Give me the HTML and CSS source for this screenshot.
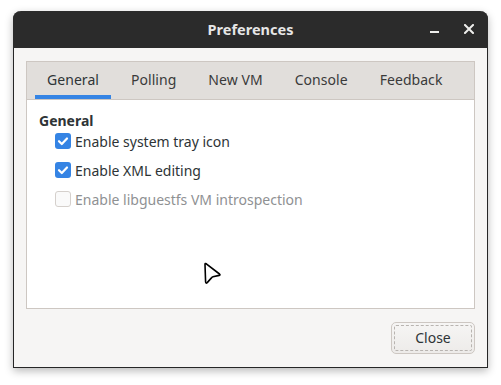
FILE: index.html
```html
<!DOCTYPE html>
<html>
<head>
<meta charset="utf-8">
<link rel="stylesheet" href="styles.css">
</head>
<body>
<div class="window">
  <div class="header">
    <div class="title">Preferences</div>
    <div class="controls">
      <span class="ctl min"><svg width="10" height="10" viewBox="0 0 10 10"><rect x="0" y="7" width="9" height="2" fill="#eeeeec"/></svg></span>
      <span class="ctl close"><svg width="10" height="10" viewBox="0 0 10 10"><path d="M1 1 L9 9 M9 1 L1 9" stroke="#eeeeec" stroke-width="2" stroke-linecap="square"/></svg></span>
    </div>
  </div>
  <div class="body">
    <div class="notebook">
      <div class="tabs">
        <div class="tab active">General</div>
        <div class="tab">Polling</div>
        <div class="tab">New VM</div>
        <div class="tab">Console</div>
        <div class="tab">Feedback</div>
      </div>
      <div class="page">
        <div class="heading">General</div>
        <div class="options">
          <label class="opt"><span class="box on"><svg width="16" height="16" viewBox="0 0 16 16"><path d="M4 8.2 L6.8 11 L12 5.5" fill="none" stroke="#fff" stroke-width="2.2" stroke-linecap="round" stroke-linejoin="round"/></svg></span>Enable system tray icon</label>
          <label class="opt"><span class="box on"><svg width="16" height="16" viewBox="0 0 16 16"><path d="M4 8.2 L6.8 11 L12 5.5" fill="none" stroke="#fff" stroke-width="2.2" stroke-linecap="round" stroke-linejoin="round"/></svg></span>Enable XML editing</label>
          <label class="opt disabled"><span class="box off"></span>Enable libguestfs VM introspection</label>
        </div>
      </div>
    </div>
    <div class="actions">
      <button class="btn">Close</button>
    </div>
  </div>
</div>
<svg class="cursor" width="24" height="26" viewBox="0 0 24 26">
  <path d="M2 2.5 Q2 1 3.3 1.8 L16.5 12 Q17.6 13 16.2 13.4 L10 14.8 Q9.2 15 8.7 15.6 L4.2 20.6 Q2.8 21.8 2.6 20 Z" fill="#fff" stroke="#000" stroke-width="1.6" stroke-linejoin="round"/>
</svg>
</body>
</html>
```
FILE: styles.css
```css
html, body {
  margin: 0;
  padding: 0;
  background: #ffffff;
}
body {
  font-family: "Noto Sans", "Open Sans", sans-serif;
  font-size: 14px;
  color: #2e3436;
  position: relative;
  width: 501px;
  height: 385px;
  overflow: hidden;
}
.window {
  margin: 11px 0 0 13px;
  width: 475px;
  height: 357px;
  box-sizing: border-box;
  border: 1px solid #262626;
  border-top: none;
  border-radius: 8px 8px 0 0;
  background: #f6f5f4;
  box-shadow: 0 3px 9px rgba(0,0,0,0.28);
  display: flex;
  flex-direction: column;
}
.header {
  height: 37px;
  margin: 0 -1px;
  background: #2b2b2b;
  border-radius: 8px 8px 0 0;
  display: flex;
  align-items: center;
  justify-content: center;
  position: relative;
  flex: none;
}
.title {
  color: #e6e6e6;
  font-weight: bold;
  font-size: 14.5px;
  margin-top: -1px;
}
.controls {
  position: absolute;
  right: 14px;
  top: 13px;
  display: flex;
  gap: 24px;
}
.ctl {
  width: 10px;
  height: 10px;
  display: block;
}
.ctl svg { display: block; }
.body {
  flex: 1;
  display: flex;
  flex-direction: column;
  padding: 13px 12px 12px 12px;
}
.notebook {
  border: 1px solid #cdc7c2;
  height: 248px;
  box-sizing: border-box;
  display: flex;
  flex-direction: column;
  background: #ffffff;
}
.tabs {
  height: 37px;
  background: #e1dedb;
  border-bottom: 1px solid #cdc7c2;
  display: flex;
  padding-left: 8px;
  gap: 8px;
  flex: none;
  box-sizing: content-box;
}
.tab {
  padding: 2px 12px 0;
  display: flex;
  align-items: center;
  color: #3a3a3a;
  font-size: 14px;
  box-sizing: border-box;
  border-bottom: 4px solid transparent;
  letter-spacing: 0.05px;
}
.tab.active {
  border-bottom-color: #3584e4;
  color: #2e3436;
}
.page {
  flex: 1;
  padding: 12px 12px;
}
.heading {
  font-weight: bold;
  font-size: 14px;
  color: #2e3436;
  line-height: 18px;
}
.options {
  padding-left: 16px;
  display: flex;
  flex-direction: column;
  gap: 9px;
  margin-top: 1px;
}
.opt {
  display: flex;
  align-items: center;
  height: 20px;
  gap: 4px;
  color: #2e3436;
}
.opt.disabled { color: #8f9193; }
.box {
  width: 16px;
  height: 16px;
  box-sizing: border-box;
  border-radius: 3px;
  display: block;
  flex: none;
}
.box svg { display: block; }
.box.on { background: #3584e4; }
.box.off {
  border: 1px solid #d5d0cc;
  background: #fafafa;
}
.actions {
  display: flex;
  justify-content: flex-end;
  margin-top: 13px;
}
.btn {
  width: 84px;
  height: 32px;
  border: 1px solid #cdc7c2;
  border-radius: 5px;
  background: linear-gradient(#f6f5f4, #edebe9);
  font-family: "Noto Sans", "Open Sans", sans-serif;
  font-size: 14px;
  color: #2e3436;
  outline: 1px dashed #b8b4b0;
  outline-offset: -4px;
  padding: 0 0 2px;
}
.cursor {
  position: absolute;
  left: 203px;
  top: 262px;
}
```
